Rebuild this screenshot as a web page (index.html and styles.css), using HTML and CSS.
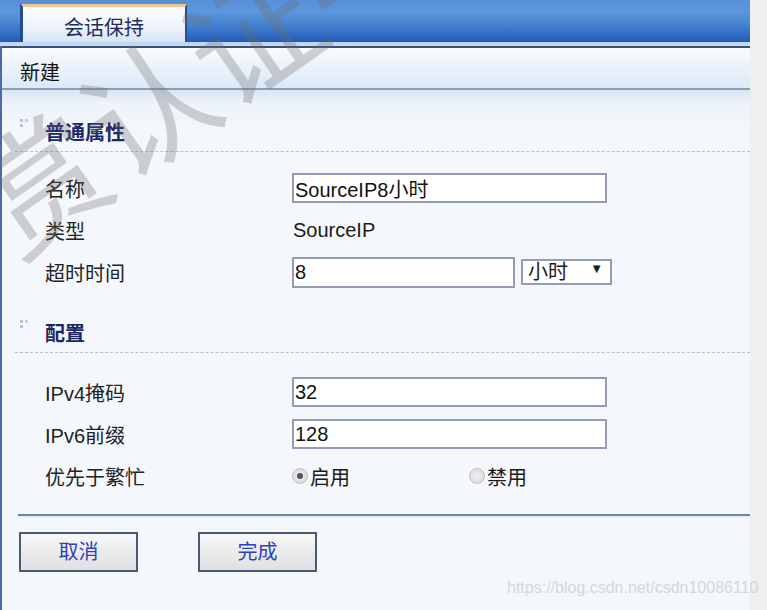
FILE: index.html
```html
<!DOCTYPE html>
<html lang="zh-CN">

<head>
    <meta charset="UTF-8">
    <title>会话保持</title>
    <link rel="stylesheet" href="styles.css">
</head>

<body>
    <div class="page">
        <div class="topbar">
            <div class="tab">会话保持</div>
        </div>
        <div class="frame">
            <div class="title">新建</div>
            <div class="content">
                <div class="section">
                    <div class="sec-head">
                        <svg class="sec-icon" width="10" height="16" viewBox="0 0 10 16">
                            <rect x="0" y="0" width="3" height="3" fill="#b8c4d4" />
                            <rect x="5" y="0" width="3" height="3" fill="#c8d2e0" />
                            <rect x="0" y="5" width="3" height="3" fill="#b8c4d4" />
                        </svg>
                        <span>普通属性</span>
                    </div>
                    <div class="rows">
                        <div class="row">
                            <span class="label">名称</span>
                            <input class="field" type="text" value="SourceIP8小时">
                        </div>
                        <div class="row">
                            <span class="label">类型</span>
                            <span class="value">SourceIP</span>
                        </div>
                        <div class="row">
                            <span class="label">超时时间</span>
                            <input class="field short" type="text" value="8">
                            <div class="select">小时<span class="arrow">&#9660;</span></div>
                        </div>
                    </div>
                </div>

                <div class="section second">
                    <div class="sec-head">
                        <svg class="sec-icon" width="10" height="16" viewBox="0 0 10 16">
                            <rect x="0" y="0" width="3" height="3" fill="#b8c4d4" />
                            <rect x="5" y="0" width="3" height="3" fill="#c8d2e0" />
                            <rect x="0" y="5" width="3" height="3" fill="#b8c4d4" />
                        </svg>
                        <span>配置</span>
                    </div>
                    <div class="rows">
                        <div class="row">
                            <span class="label">IPv4掩码</span>
                            <input class="field" type="text" value="32">
                        </div>
                        <div class="row">
                            <span class="label">IPv6前缀</span>
                            <input class="field" type="text" value="128">
                        </div>
                        <div class="row">
                            <span class="label">优先于繁忙</span>
                            <div class="radio-item"><span class="radio checked"></span>启用</div>
                            <div class="radio-item"><span class="radio"></span>禁用</div>
                        </div>
                    </div>
                </div>

                <div class="actions">
                    <div class="btn">取消</div>
                    <div class="btn">完成</div>
                </div>
            </div>
        </div>
    </div>

    <div class="wm-big">赏认证-</div>
    <div class="wm-url">https://blog.csdn.net/csdn10086110</div>
</body>

</html>
```

FILE: styles.css
```css
* {
    box-sizing: border-box;
}

body {
    margin: 0;
    width: 767px;
    height: 610px;
    overflow: hidden;
    background-color: #efefef;
    font-family: "Liberation Sans", "Noto Sans CJK SC", sans-serif;
    font-size: 20px;
    color: #1a1a1a;
    position: relative;
}

.page {
    width: 750px;
    height: 610px;
    background-color: #f4f7fb;
    display: flex;
    flex-direction: column;
}

/* 顶部蓝色标签栏 */
.topbar {
    height: 46px;
    flex-shrink: 0;
    padding: 4px 0 0 21px;
    background: linear-gradient(to bottom, #5790d8 0%, #5c96dc 25%, #4a85d0 50%, #3470c6 72%, #2558b4 91%, #bcd5ef 91%, #c6dcf2 100%);
}

.tab {
    width: 166px;
    height: 38px;
    padding-top: 5px;
    text-align: center;
    color: #1f2c5c;
    border: 2px solid #2b4d8c;
    border-bottom: none;
    border-top: 3px solid #f3c48e;
    background: linear-gradient(to bottom, #ffffff, #eef4fb 55%, #d6e4f4);
    box-shadow: -1px 0 0 #1f4a92;
}

.frame {
    flex: 1;
    border-left: 2px solid #4b6ba8;
}

.title {
    height: 44px;
    padding: 9px 0 0 18px;
    color: #111;
    border-top: 2px solid #3d5075;
    border-bottom: 2px solid #8d9db5;
    background: linear-gradient(to bottom, #f8fcff, #eef3fb 40%, #dbe9f8);
}

.content {
    padding: 21px 0 0 13px;
    background: linear-gradient(to bottom, #d9e5f3 0px, #eef3fa 14px, #f4f7fb 40px);
}

.sec-head {
    height: 41px;
    display: flex;
    align-items: center;
    padding-left: 5px;
    border-bottom: 1px dashed #b9bec8;
    color: #1b2868;
    font-weight: bold;
}

.sec-icon {
    margin: 0 15px 0 0;
    align-self: flex-start;
    margin-top: 8px;
}

.rows {
    padding-top: 15px;
}

.section.second {
    margin-top: 19px;
}

.section.second .rows {
    padding-top: 18px;
}

.row {
    height: 42px;
    display: flex;
    align-items: center;
}

.label {
    width: 277px;
    padding-left: 30px;
    color: #222;
}

.value {
    padding-left: 1px;
}

.field {
    width: 315px;
    height: 30px;
    margin: 0;
    padding: 0 0 0 1px;
    border: 2px solid #939eb6;
    background-color: #fff;
    font-family: inherit;
    font-size: 20px;
    color: #111;
    outline: none;
}

.field.short {
    width: 223px;
    height: 31px;
}

.select {
    width: 91px;
    height: 26px;
    margin-left: 6px;
    padding-left: 5px;
    border: 2px solid #939eb6;
    background-color: #fff;
    display: flex;
    align-items: center;
    line-height: 22px;
}

.arrow {
    font-size: 13px;
    margin-left: auto;
    margin-right: 7px;
    margin-top: -6px;
}

.radio-item {
    width: 177px;
    display: flex;
    align-items: center;
}

.radio {
    width: 16px;
    height: 16px;
    margin-right: 2px;
    border-radius: 50%;
    border: 1px solid #c4c4c4;
    background: radial-gradient(circle, #f2f2f2, #d4d4d4);
    display: flex;
    align-items: center;
    justify-content: center;
}

.radio.checked::after {
    content: "";
    width: 6px;
    height: 6px;
    border-radius: 50%;
    background-color: #555;
}

.actions {
    margin: 17px 0 0 3px;
    padding: 16px 0 0 1px;
    border-top: 2px solid #6d86ad;
    box-shadow: inset 0 2px 0 #e4eef6;
    display: flex;
    gap: 60px;
}

.btn {
    width: 119px;
    height: 40px;
    line-height: 36px;
    text-align: center;
    color: #2b40c2;
    border: 2px solid #4b5a70;
    background: linear-gradient(to bottom, #f7f7f7, #e0e0e2);
}

/* 水印 */
.wm-big {
    position: absolute;
    left: -22px;
    top: 122px;
    font-size: 130px;
    line-height: 130px;
    white-space: nowrap;
    font-weight: normal;
    color: rgba(110, 110, 110, 0.3);
    transform-origin: 65px 65px;
    transform: rotate(-35deg);
    pointer-events: none;
}

.wm-url {
    position: absolute;
    left: 507px;
    top: 579px;
    font-size: 16px;
    color: #d3d8de;
    white-space: nowrap;
    pointer-events: none;
}
```
